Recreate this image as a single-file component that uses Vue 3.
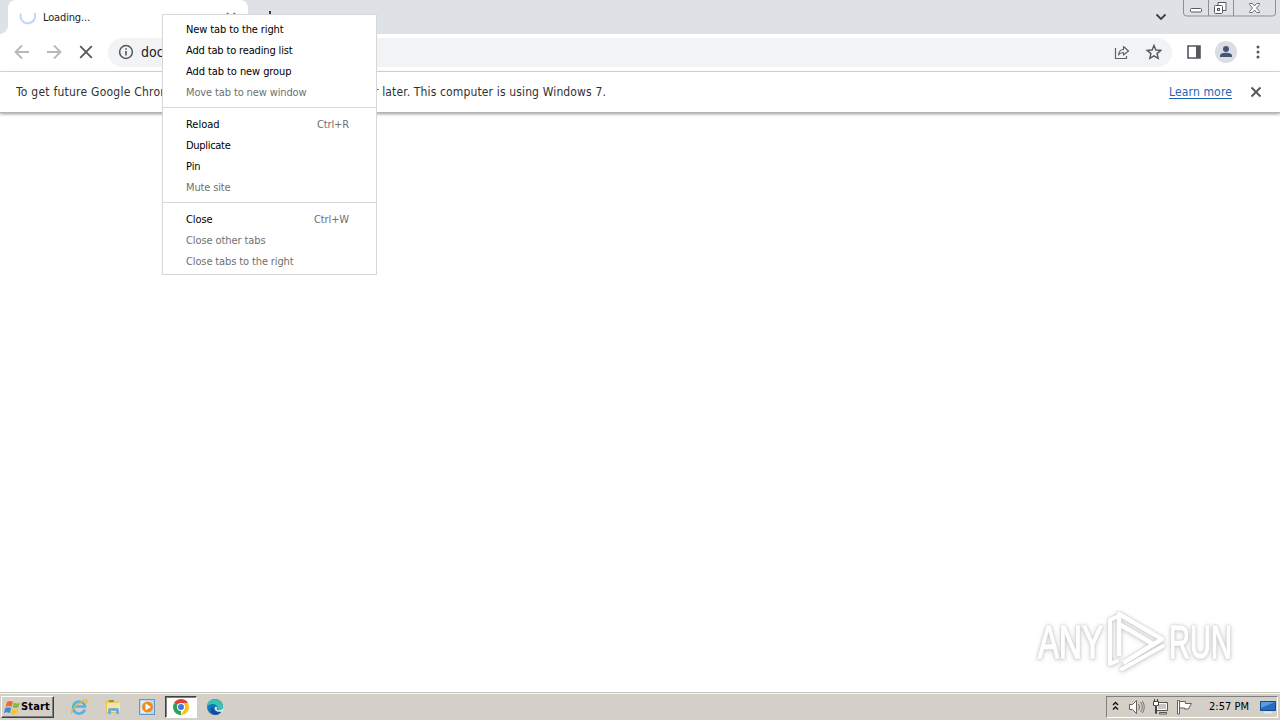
<script setup>
const vFit = {
  mounted(el, { value }) {
    const width = el.getBoundingClientRect().width
    el.style.letterSpacing = `${(value - width) / el.textContent.length}px`
  },
}

const groups = [
  [
    { label: 'New tab to the right', w: 97.5 },
    { label: 'Add tab to reading list', w: 106.5 },
    { label: 'Add tab to new group', w: 105.5 },
    { label: 'Move tab to new window', w: 120.5, off: true },
  ],
  [
    { label: 'Reload', w: 33.5, key: 'Ctrl+R', kw: 32 },
    { label: 'Duplicate', w: 44.5 },
    { label: 'Pin', w: 14.5 },
    { label: 'Mute site', w: 44.5, off: true },
  ],
  [
    { label: 'Close', w: 26.5, key: 'Ctrl+W', kw: 35 },
    { label: 'Close other tabs', w: 79.5, off: true },
    { label: 'Close tabs to the right', w: 107.5, off: true },
  ],
]
</script>

<template>
  <div class="screen">
    <header class="strip">
      <div class="tab">
        <svg class="spinner" width="18" height="18" viewBox="0 0 18 18"><path d="M2 6.500A7.300 7.300 0 1 0 15.500 6" fill="none" stroke="#c3d6f8" stroke-width="2" /></svg>
        <span v-fit="47" class="tab-title">Loading...</span>
        <svg class="tab-close" width="10" height="10" viewBox="0 0 10 10"><path d="M1 1l8 8M9 1L1 9" stroke="#5f6368" stroke-width="1.600" /></svg>
      </div>
      <svg class="plus" width="12" height="12" viewBox="0 0 12 12"><path d="M6 0v12M0 6h12" stroke="#3c4043" stroke-width="2" /></svg>
      <svg class="chevron" width="12" height="8" viewBox="0 0 12 8"><path d="M1.500 1.500L6 6l4.500-4.500" fill="none" stroke="#3c4043" stroke-width="1.800" /></svg>
      <svg class="winbtns" width="94" height="18" viewBox="0 0 94 18">
        <path d="M.5 0v13q0 3 3 3h86q3 0 3-3V0M25.500 0v16M50.500 0v16" fill="none" stroke="#8b8f96" />
        <rect x="7.500" y="8.500" width="11" height="3.500" rx="1" fill="#fff" stroke="#555963" />
        <path d="M35 5.500V2.500h8v8h-3" fill="#fff" stroke="#555963" />
        <rect x="31.500" y="5.500" width="8" height="8" rx="1" fill="#fff" stroke="#555963" /><rect x="34.500" y="8.500" width="2" height="2" fill="#dee1e6" stroke="#555963" />
        <path d="M66.500 3.500h3l2 2.500 2-2.500h3v1L73.500 8l3 3.500v1h-3l-2-2.500-2 2.500h-3v-1l3-3.500-3-3.500z" fill="#fff" stroke="#6c7079" />
      </svg>
    </header>

    <nav class="toolbar">
      <svg width="16" height="16" viewBox="0 0 16 16"><path d="M15 8H2M8 1.500L1.500 8 8 14.500" fill="none" stroke="#b6b8ba" stroke-width="1.800" /></svg>
      <svg width="16" height="16" viewBox="0 0 16 16"><path d="M1 8h13M8 1.500L14.500 8 8 14.500" fill="none" stroke="#b6b8ba" stroke-width="1.800" /></svg>
      <svg width="16" height="16" viewBox="0 0 16 16"><path d="M2.200 2.200l11.600 11.600M13.800 2.200L2.200 13.800" stroke="#54575b" stroke-width="1.800" /></svg>
      <div class="omnibox">
        <svg width="16" height="16" viewBox="0 0 16 16"><circle cx="8" cy="8" r="6.400" fill="none" stroke="#54575b" stroke-width="1.500" /><path d="M8 7v4.500M8 4.200v1.600" stroke="#54575b" stroke-width="1.600" /></svg>
        <span class="url">docs</span>
        <svg class="share" width="16" height="16" viewBox="0 0 16 16"><path d="M1.500 4v10.500h11V12M4.500 11c.5-4 2-5.500 5-5.500v-3L14.500 7l-5 4V8.500c-2.500 0-3.500.5-5 2.500z" fill="none" stroke="#5f6368" stroke-width="1.200" stroke-linejoin="round" /></svg>
        <svg width="16" height="16" viewBox="0 0 16 16"><path d="M8 1.500l1.900 4.500 4.900.4-3.700 3.200 1.100 4.800L8 11.900l-4.200 2.500 1.100-4.800-3.700-3.200L6.100 6z" fill="none" stroke="#54575b" stroke-width="1.400" /></svg>
      </div>
      <svg class="panel" width="14" height="14" viewBox="0 0 14 14"><path d="M1 1h12v12H1z" fill="none" stroke="#54575b" stroke-width="1.600" /><path d="M9 1h4v12H9z" fill="#54575b" /></svg>
      <svg class="avatar" width="22" height="22" viewBox="0 0 22 22"><circle cx="11" cy="11" r="11" fill="#dadde3" /><circle cx="11" cy="8" r="3" fill="#465475" /><path d="M5 16v-1.500C5 12.500 9 11.800 11 11.800s6 .7 6 2.700V16z" fill="#465475" /></svg>
      <svg class="dots" width="4" height="14" viewBox="0 0 4 14" fill="#54575b"><circle cx="2" cy="2" r="1.500" /><circle cx="2" cy="7" r="1.500" /><circle cx="2" cy="12" r="1.500" /></svg>
    </nav>

    <div class="infobar">
      <span class="clip"><span v-fit="162" class="info">To get future Google Chrome</span></span>
      <span v-fit="232" class="info">r later. This computer is using Windows 7.</span>
      <a v-fit="63" class="learn">Learn more</a>
      <svg width="12" height="12" viewBox="0 0 12 12"><path d="M1.500 1.500l9 9M10.500 1.500l-9 9" stroke="#54575b" stroke-width="1.900" /></svg>
    </div>

    <main class="page">
      <svg class="mark" width="206" height="72" viewBox="0 0 206 72">
        <g class="mark-ink">
          <text x="4" y="52" textLength="65" lengthAdjust="spacingAndGlyphs">ANY</text>
          <text x="135" y="52" textLength="63" lengthAdjust="spacingAndGlyphs">RUN</text>
          <path d="M82 11l-6 3v44l7-3M88 63l41-23" fill="none" stroke="#fff" stroke-width="4" stroke-linejoin="round" stroke-linecap="round" />
          <path d="M85 50V8l43 25-39 24M85 18l34 20" fill="none" stroke="#fff" stroke-width="4.500" stroke-linejoin="round" />
        </g>
      </svg>
    </main>

    <footer class="taskbar">
      <div class="start">
        <svg width="17" height="17" viewBox="0 0 17 17">
          <path d="M3 3c2-1.500 4-1.500 6 0L7.500 8c-2-1.300-4-1.200-6 0z" fill="#ed6b2d" /><path d="M10 3.500c2 1.300 4 1.200 6 0L14.500 8c-2 1.400-4 1.400-6 .3z" fill="#86b943" /><path d="M1.200 9.200c2-1.200 4-1.300 6 0l-1.400 5c-2-1.400-4-1.400-6 0z" fill="#3c8ed0" /><path d="M8.300 9.700c2 1.200 4 1.100 6-.2l-1.500 5c-2 1.400-4 1.200-6 0z" fill="#f6c331" />
        </svg>
        <span v-fit="29" class="start-text">Start</span>
      </div>
      <div class="apps">
        <div class="app"><svg width="18" height="18" viewBox="0 0 18 18"><path d="M14.800 11.500A6 6 0 1 1 15 8.500H4" fill="none" stroke="#58b3e3" stroke-width="2.600" /><path d="M2 15.500C-1 12 14 0 16.500 2.500q.8 1-1 3" fill="none" stroke="#e5b632" stroke-width="1.300" /></svg></div>
        <div class="app"><svg width="18" height="18" viewBox="0 0 18 18"><path d="M2 2h5l1 2h7v11H2z" fill="#e9c45d" /><path d="M3 5h13v9H3z" fill="#f7e4a0" /><path d="M5 3h5" stroke="#59a967" stroke-width="2" /><path d="M4 16v-4q0-2 2-2h7q2 0 2 2v4h-3v-3H7v3z" fill="#71aed1" /></svg></div>
        <div class="app"><svg width="18" height="18" viewBox="0 0 18 18"><rect x="1.500" y="1.500" width="15" height="15" fill="#b8d9ef" stroke="#5e9acb" /><path d="M3 3h9v12H3z" fill="#e3eef5" /><circle cx="9.500" cy="9" r="5.500" fill="#ef8a1d" /><path d="M7.500 5.500L13 9l-5.500 3.500z" fill="#fff" /></svg></div>
        <div class="app active"><svg width="16" height="16" viewBox="0 0 16 16"><path d="M8 8L1.100 4A8 8 0 0 1 14.900 4z" fill="#e34133" /><path d="M8 8h-.1L8 16A8 8 0 0 1 1.100 4z" fill="#29a352" /><path d="M8 4h6.900A8 8 0 0 1 8 16l3.500-6z" fill="#fbc116" /><circle cx="8" cy="8" r="4" fill="#fff" /><circle cx="8" cy="8" r="3" fill="#3c7be5" /></svg></div>
        <div class="app"><svg width="16" height="16" viewBox="0 0 16 16"><circle cx="8" cy="8" r="8" fill="#1675bd" /><path d="M.3 6C2-2 15-1.500 16 7.500c0 3-3.500 4-6 3 1-2 .5-4-2-5-3-1-6-.5-7.700 2.500z" fill="#37c2b1" /><path d="M6.500 7.500c-2 4 2.500 6.500 8 4.500-3 5-8 4.500-10 2-2-2-1-5.500 2-6.500z" fill="#174e92" /><path d="M8 8q2-1 2 1-1 2 1 2.200 3 .3 5-2v3q-2 1-5 .5-4-1-3-4.700z" fill="#ddeef0" /></svg></div>
      </div>
      <div class="tray">
        <svg class="up" width="7" height="10" viewBox="0 0 7 10"><path d="M1 4l2.500-2.500L6 4M1 8.500L3.500 6 6 8.500" fill="none" stroke="#111" stroke-width="1.400" /></svg>
        <svg class="vol" width="17" height="16" viewBox="0 0 17 16"><path d="M1.500 5.500h3l4-4v13l-4-4h-3z" fill="#fff" stroke="#62605d" /><path d="M10.500 5q2 3 0 6M12.500 3q3.500 5 0 10M14.300 2q4 6 0 12" fill="none" stroke="#77746f" /></svg>
        <svg class="net" width="17" height="16" viewBox="0 0 17 16"><path d="M4.500 3.500h11v8h-11z" fill="#c9c6c0" stroke="#555" /><path d="M5.500 4.500h9v6h-9z" fill="none" stroke="#fff" /><path d="M7.500 13.500h7v1.500h-7z" fill="#fff" stroke="#555" /><path d="M1.500 2.500h5v4h-2v8h-1v-8h-2zM2.500 0v2M5.500 0v2" fill="#fff" stroke="#444" /></svg>
        <svg class="flag" width="17" height="16" viewBox="0 0 17 16"><path d="M1.500 1.500h2V15h-2z" fill="#fff" stroke="#65625e" /><path d="M3.500 2.500h6v2h6l-2 3.500-1 2h-4V9h-5z" fill="#fff" stroke="#65625e" /></svg>
        <span v-fit="40" class="clock">2:57 PM</span>
        <svg class="desk" width="16" height="14" viewBox="0 0 16 14"><path d="M.5 1.500h15v9H.5z" fill="#266bc3" stroke="#17488d" /><path d="M1 2h14L1 8z" fill="#5a9ce3" /><path d="M4 12.500h8" stroke="#dce7ef" stroke-width="2" /></svg>
      </div>
    </footer>

    <div class="menu">
      <div v-for="(group, i) in groups" :key="i" class="group">
        <div v-for="item in group" :key="item.label" class="item" :class="{ off: item.off }">
          <span v-fit="item.w">{{ item.label }}</span>
          <span v-if="item.key" v-fit="item.kw" class="key">{{ item.key }}</span>
        </div>
      </div>
    </div>
  </div>
</template>

<style>
body { margin: 0; overflow: hidden; }
</style>

<style scoped>
.screen { position: relative; width: 1280px; height: 720px; display: flex; flex-direction: column; background: #fff; font: 11px/14px "DejaVu Sans Condensed", "DejaVu Sans", sans-serif; color: #222; overflow: hidden; white-space: nowrap; }
.screen * { box-sizing: border-box; }
svg { display: block; flex: none; }
.strip { height: 34px; flex: none; display: flex; background: #dee1e6; }
.tab { width: 240px; height: 34px; margin-left: 8px; padding: 0 12px 0 11px; display: flex; align-items: center; background: #fff; border-radius: 8px 8px 0 0; position: relative; }
.tab::before, .tab::after { content: ""; position: absolute; bottom: 0; width: 8px; height: 8px; }
.tab::before { left: -8px; background: radial-gradient(circle at 0 0, transparent 7.5px, #fff 8px); }
.tab::after { right: -8px; background: radial-gradient(circle at 100% 0, transparent 7.5px, #fff 8px); }
.spinner { margin-right: 6px; margin-bottom: 2px; }
.tab-title { padding-top: 1px; }
.tab-close { margin-left: auto; }
.plus { margin: 11px 0 0 16px; }
.chevron { margin: 13px 16px 0 auto; }
.winbtns { margin-right: 3px; }
.toolbar { height: 38px; flex: none; display: flex; align-items: center; padding: 0 20px 2px 14px; gap: 16px; background: #fff; border-bottom: 1px solid #d9dadc; }
.omnibox { width: 1064px; height: 29px; margin-left: -2px; margin-top: 2px; border-radius: 15px; background: #f1f3f4; display: flex; align-items: center; padding: 0 10px 2px; }
.url { margin-left: 7px; font-size: 14px; }
.share { margin: 0 16px 0 auto; }
.panel { margin-left: -1px; }
.avatar { margin-left: -2px; }
.dots { margin-left: 3px; }
.infobar { height: 41px; flex: none; display: flex; align-items: center; padding: 0 18px 1px 16px; font-size: 12px; background: #fff; border-bottom: 1px solid #b4b4b4; box-shadow: 0 1px 3px #999; z-index: 1; color: #303134; }
.clip { width: 358px; overflow: hidden; }
.info { display: inline-block; }
.learn { margin-left: auto; margin-right: 18px; color: #1b66b5; text-decoration: underline; text-underline-offset: 2px; }
.page { flex: 1; display: flex; align-items: flex-end; justify-content: flex-end; padding: 0 40px 14px 0; }
.mark { overflow: visible; }
.mark-ink { filter: drop-shadow(0 0 1px #c4c4c4) drop-shadow(0 1px 2px #d4d4d4); }
.mark text { font: 46px "Liberation Sans", sans-serif; fill: #fff; stroke: #fff; stroke-width: 1.5px; }
.taskbar { height: 28px; flex: none; display: flex; align-items: center; background: #d4d0c8; border-top: 1px solid #c5c5c0; box-shadow: inset 0 1px #f7f7f5; padding: 1px 2px 0 1px; }
.start { width: 53px; height: 22px; display: flex; align-items: center; padding-left: 2px; font-weight: bold; color: #000; border: 1px solid; border-color: #fff #404040 #404040 #fff; box-shadow: inset -1px -1px #808080; }
.apps { display: flex; margin-left: 9px; gap: 2px; }
.app { width: 32px; height: 22px; display: flex; align-items: center; justify-content: center; }
.active { background: #fff; border: 1px solid; border-color: #404040 #fff #fff #404040; box-shadow: inset 1px 1px #808080; }
.tray { width: 172px; height: 22px; margin-left: auto; display: flex; align-items: center; border: 1px solid; border-color: #808080 #fff #fff #808080; padding: 0 1px 0 5px; color: #000; }
.up { margin-bottom: 2px; }
.vol { margin-left: 9px; }
.net { margin-left: 7px; }
.flag { margin-left: 7px; }
.clock { margin-left: 16px; }
.desk { margin-left: auto; }
.menu { position: absolute; z-index: 3; left: 162px; top: 14px; width: 215px; height: 261px; padding-top: 4px; border: 1px solid #d5d7d8; background: #fff; color: #000; }
.group + .group { margin-top: 4px; padding-top: 6px; border-top: 1px solid #d5d7d8; }
.item { height: 21px; padding: 0 27px 0 23px; display: flex; justify-content: space-between; align-items: center; }
.off, .key { color: #707070; }
</style>
